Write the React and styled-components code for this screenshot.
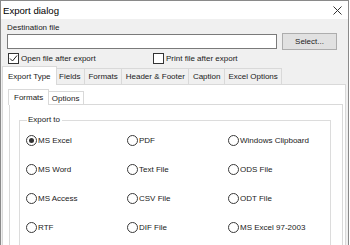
import React from 'react';
import styled, { createGlobalStyle } from 'styled-components';

const GlobalStyle = createGlobalStyle`
  html, body {
    margin: 0;
    padding: 0;
    background: #ffffff;
  }
  body {
    font-family: "Liberation Sans", Arial, sans-serif;
    font-size: 8px;
    color: #1a1a1a;
  }
`;

const Window = styled.div`
  width: 349px;
  height: 245px;
  box-sizing: border-box;
  border: 1px solid #8a8a8a;
  border-bottom: none;
  background: #f0f0f0;
  overflow: hidden;
  display: flex;
  flex-direction: column;
`;

const TitleBar = styled.div`
  height: 18px;
  flex: none;
  background: #fff;
  display: flex;
  align-items: center;
  justify-content: space-between;
  padding: 0 6px 0 2px;
  font-size: 9.6px;
  color: #000;
`;

const Top = styled.div`
  padding: 0 11px 0 6px;
  display: flex;
  flex-direction: column;
`;

const Label = styled.div`
  margin-top: 3px;
  height: 11px;
  line-height: 11px;
`;

const InputRow = styled.div`
  display: flex;
  align-items: center;
  gap: 5px;
  height: 17px;
`;

const TextInput = styled.div`
  flex: 1;
  height: 15px;
  box-sizing: border-box;
  background: #fff;
  border: 1px solid #7a7a7a;
`;

const Button = styled.div`
  width: 55px;
  height: 17px;
  box-sizing: border-box;
  background: #e1e1e1;
  border: 1px solid #adadad;
  display: flex;
  align-items: center;
  justify-content: center;
  color: #222;
`;

const CheckRow = styled.div`
  margin-top: 2px;
  height: 12px;
  display: grid;
  grid-template-columns: 145px 1fr;
  padding-left: 1px;
`;

const CheckItem = styled.div`
  display: flex;
  align-items: center;
  gap: 2px;
`;

const Box = styled.span`
  width: 11px;
  height: 11px;
  box-sizing: border-box;
  border: 1px solid #333;
  background: #fff;
  display: flex;
  align-items: center;
  justify-content: center;
`;

const TabStrip = styled.div`
  display: flex;
  align-items: flex-end;
  height: ${(p) => p.h}px;
  margin-left: ${(p) => p.ml || 0}px;
  margin-top: ${(p) => p.mt || 0}px;
  position: relative;
  z-index: 1;
  margin-bottom: -1px;
`;

const Tab = styled.div`
  box-sizing: border-box;
  height: ${(p) => (p.active ? p.h : p.h - 2)}px;
  padding: 0 ${(p) => (p.active ? 5 : 3.5)}px;
  margin: 0 ${(p) => (p.active ? -1 : 0)}px;
  display: flex;
  align-items: center;
  background: ${(p) => (p.active ? '#fff' : p.bg || '#f0f0f0')};
  border: 1px solid #d9d9d9;
  border-bottom: ${(p) => (p.active ? 'none' : '1px solid #d9d9d9')};
  border-left: ${(p) => (p.first || p.active ? '1px solid #d9d9d9' : 'none')};
  position: relative;
  z-index: ${(p) => (p.active ? 2 : 1)};
  white-space: nowrap;
`;

const Panel = styled.div`
  flex: 1;
  margin: 0 2px 0 1px;
  background: #fff;
  border: 1px solid #d9d9d9;
  border-bottom: none;
  padding: 4px 2px 0 6px;
  display: flex;
  flex-direction: column;
`;

const InnerPanel = styled.div`
  flex: 1;
  border: 1px solid #d9d9d9;
  border-bottom: none;
  padding: 10px 11px 0 9px;
`;

const Group = styled.fieldset`
  margin: 0;
  border: 1px solid #dcdcdc;
  border-bottom: none;
  padding: 1px 6px 0 6px;
  height: 140px;
`;

const Legend = styled.legend`
  padding: 0 2px 0 1px;
  line-height: 10px;
  margin-left: 1px;
`;

const Grid = styled.div`
  display: grid;
  grid-template-columns: 101px 101px 1fr;
  grid-auto-rows: 29px;
`;

const RadioItem = styled.div`
  display: flex;
  align-items: center;
  gap: 1px;
`;

const Radio = styled.span`
  width: 11px;
  height: 11px;
  box-sizing: border-box;
  border-radius: 50%;
  border: 1px solid #3a3a3a;
  background: #fff;
  display: flex;
  align-items: center;
  justify-content: center;
  &::after {
    content: '';
    width: 5px;
    height: 5px;
    border-radius: 50%;
    background: ${(p) => (p.checked ? '#333' : 'transparent')};
  }
`;

const outerTabs = ['Export Type', 'Fields', 'Formats', 'Header & Footer', 'Caption', 'Excel Options'];
const formats = [
  ['MS Excel', 'PDF', 'Windows Clipboard'],
  ['MS Word', 'Text File', 'ODS File'],
  ['MS Access', 'CSV File', 'ODT File'],
  ['RTF', 'DIF File', 'MS Excel 97-2003'],
];

function Check({ checked, children }) {
  return (
    <CheckItem>
      <Box>
        {checked && (
          <svg width="9" height="9" viewBox="0 0 9 9">
            <path d="M1 4.5 L3.5 7 L8 1.5" fill="none" stroke="#222" strokeWidth="1" />
          </svg>
        )}
      </Box>
      {children}
    </CheckItem>
  );
}

export default function App() {
  return (
    <>
      <GlobalStyle />
      <Window>
        <TitleBar>
          <span>Export dialog</span>
          <svg width="9" height="9" viewBox="0 0 9 9">
            <path d="M0.5 0.5 L8.5 8.5 M8.5 0.5 L0.5 8.5" stroke="#333" strokeWidth="1" />
          </svg>
        </TitleBar>
        <Top>
          <Label>Destination file</Label>
          <InputRow>
            <TextInput />
            <Button>Select...</Button>
          </InputRow>
          <CheckRow>
            <Check checked>Open file after export</Check>
            <Check>Print file after export</Check>
          </CheckRow>
        </Top>
        <TabStrip h={19} ml={2} mt={2}>
          {outerTabs.map((t, i) => (
            <Tab key={t} h={19} active={i === 0} first={i === 0}>
              {t}
            </Tab>
          ))}
        </TabStrip>
        <Panel>
          <TabStrip h={16}>
            <Tab h={16} active first>Formats</Tab>
            <Tab h={16} bg="#fff">Options</Tab>
          </TabStrip>
          <InnerPanel>
            <Group>
              <Legend>Export to</Legend>
              <Grid>
                {formats.flat().map((f, i) => (
                  <RadioItem key={f}>
                    <Radio checked={i === 0} />
                    {f}
                  </RadioItem>
                ))}
              </Grid>
            </Group>
          </InnerPanel>
        </Panel>
      </Window>
    </>
  );
}
